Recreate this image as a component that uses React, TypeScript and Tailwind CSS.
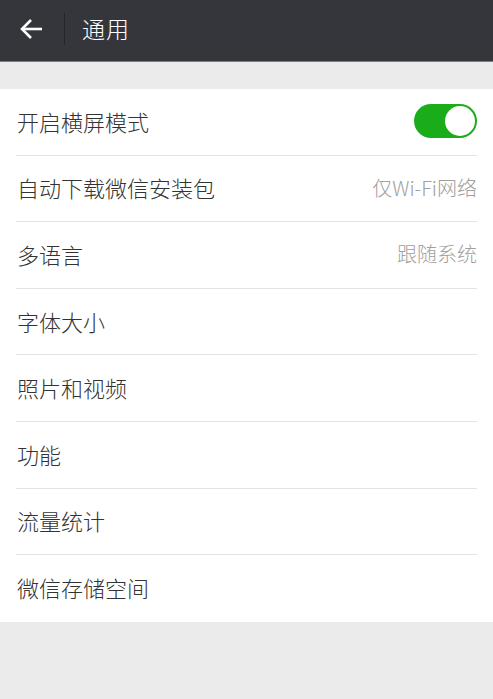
import React from 'react';

const font = { fontFamily: '"Noto Sans CJK SC", "Liberation Sans", sans-serif' };

type Row = { label: string; value?: string; toggle?: boolean };

const rows: Row[] = [
  { label: '开启横屏模式', toggle: true },
  { label: '自动下载微信安装包', value: '仅Wi-Fi网络' },
  { label: '多语言', value: '跟随系统' },
  { label: '字体大小' },
  { label: '照片和视频' },
  { label: '功能' },
  { label: '流量统计' },
  { label: '微信存储空间' },
];

export default function App() {
  return (
    <div className="w-[493px] h-[699px] bg-[#ebebeb] flex flex-col" style={font}>
      {/* Header */}
      <div className="h-[62px] bg-[#35363b] border-b border-[#7d7d80] flex items-center pb-[4px]">
        <div className="w-[64px] flex justify-center pr-[3px]">
          <svg width="24" height="22" viewBox="0 0 24 22" fill="none" stroke="white" strokeWidth="2.6" strokeLinecap="butt">
            <path d="M23 11H3" />
            <path d="M12 2L3 11l9 9" />
          </svg>
        </div>
        <div className="w-px h-[32px] bg-[#242529]" />
        <div className="pl-[17px] text-white text-[23px] tracking-[1px] font-light">通用</div>
      </div>

      {/* List */}
      <div className="mt-[27px] bg-white">
        {rows.map((r, i) => (
          <div key={r.label} className="px-4">
            <div
              className={
                'h-[66.6px] flex items-center justify-between pb-[1px] ' +
                (i < rows.length - 1 ? 'border-b border-[#e3e3e3]' : '')
              }
            >
              <span className="text-[22px] text-[#333333] pl-[1px] font-light">{r.label}</span>
              {r.value && <span className="text-[20px] text-[#a0a0a0] font-light">{r.value}</span>}
              {r.toggle && (
                <div className="w-[63px] h-[34px] rounded-full bg-[#1aad19] flex items-center justify-end pr-[2px]">
                  <div className="w-[30px] h-[30px] rounded-full bg-white" />
                </div>
              )}
            </div>
          </div>
        ))}
      </div>
    </div>
  );
}
